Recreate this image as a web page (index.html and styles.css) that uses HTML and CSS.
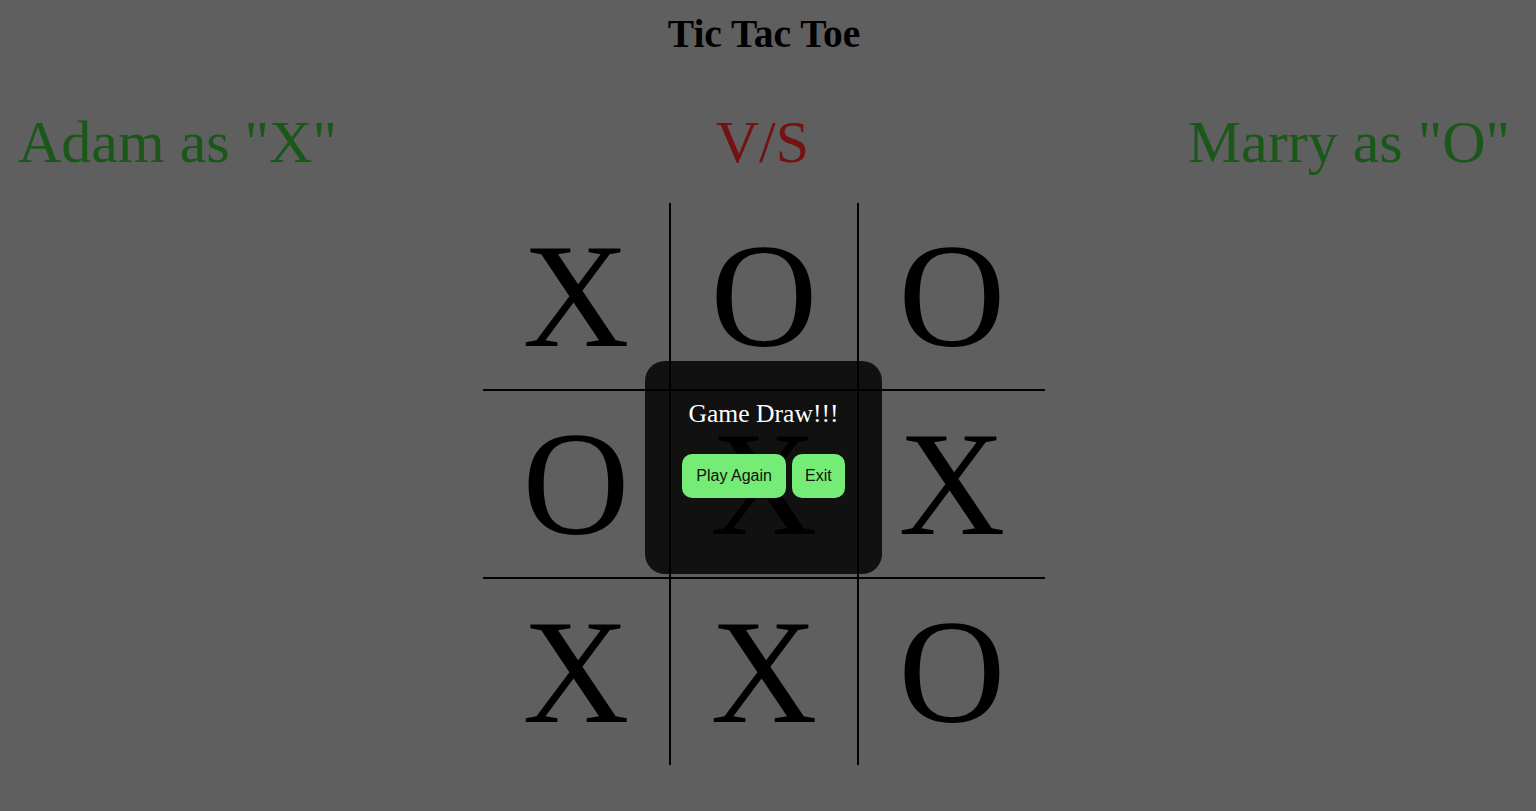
FILE: index.html
```html
<!DOCTYPE html>
<html>
<head>
<meta charset="utf-8">
<title>Tic Tac Toe</title>
<link rel="stylesheet" href="styles.css">
</head>
<body>
<div class="app">
  <h1 class="title">Tic Tac Toe</h1>
  <div class="players">
    <div class="player">Adam as "X"</div>
    <div class="vs">V/S</div>
    <div class="player">Marry as "O"</div>
  </div>
  <div class="board">
    <div class="cell c-r c-b">X</div>
    <div class="cell c-r c-b">O</div>
    <div class="cell c-b">O</div>
    <div class="cell c-r c-b">O</div>
    <div class="cell c-r c-b">X</div>
    <div class="cell c-b">X</div>
    <div class="cell c-r">X</div>
    <div class="cell c-r">X</div>
    <div class="cell">O</div>
  </div>
  <div class="modal">
    <p class="modal-text">Game Draw!!!</p>
    <div class="modal-actions">
      <button class="btn btn-play">Play Again</button>
      <button class="btn btn-exit">Exit</button>
    </div>
  </div>
</div>
</body>
</html>
```

FILE: styles.css
```css
html, body {
  margin: 0;
  padding: 0;
}
body {
  background: #5f5f5f;
  font-family: "Liberation Serif", "Times New Roman", serif;
  color: #000;
  height: 811px;
  overflow: hidden;
}
.app {
  margin-right: 8px;
  padding-top: 11px;
  position: relative;
  height: 800px;
}
.title {
  margin: 0;
  text-align: center;
  font-size: 39.5px;
  font-weight: bold;
  line-height: normal;
}
.players {
  display: flex;
  justify-content: space-between;
  align-items: baseline;
  margin-top: 51px;
  padding: 0 18px;
  font-size: 60px;
  line-height: normal;
}
.player {
  color: #1a581a;
}
.vs {
  color: #721212;
}
.board {
  display: grid;
  grid-template-columns: repeat(3, auto);
  width: 562px;
  margin: 26px auto 0;
}
.cell {
  width: 186px;
  height: 186px;
  display: flex;
  align-items: center;
  justify-content: center;
  font-size: 148px;
  line-height: normal;
}
.c-r {
  border-right: 2px solid #000;
}
.c-b {
  border-bottom: 2px solid #000;
}
.modal {
  position: absolute;
  left: 645px;
  top: 361px;
  width: 237px;
  height: 213px;
  box-sizing: border-box;
  border-radius: 20px;
  background: rgba(0, 0, 0, 0.82);
  padding-top: 38px;
  text-align: center;
}
.modal-text {
  margin: 0;
  color: #fff;
  font-size: 25.6px;
  line-height: normal;
}
.modal-actions {
  display: flex;
  justify-content: center;
  gap: 6px;
  margin-top: 25px;
}
.btn {
  border: none;
  border-radius: 10px;
  background: #75ec75;
  color: #111;
  font-family: "Liberation Sans", Arial, sans-serif;
  font-size: 16px;
  line-height: 18px;
  padding: 13px 14px;
  cursor: pointer;
}
.btn-exit {
  padding: 13px 13px;
}
```
